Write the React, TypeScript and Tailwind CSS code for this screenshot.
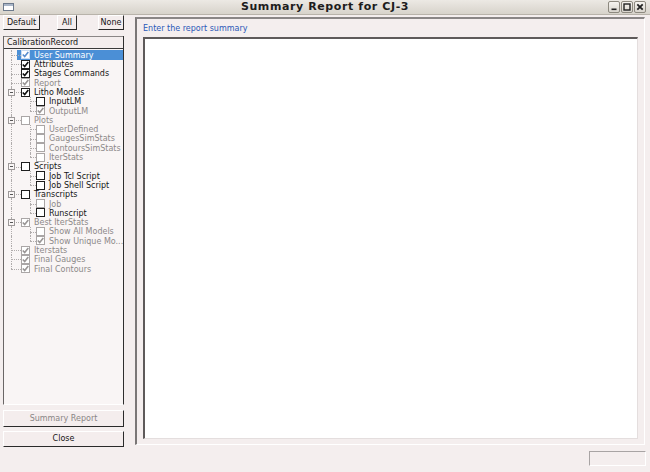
import React from "react";

type Item = {
  label: string;
  level: 0 | 1;
  checked: boolean;
  enabled: boolean;
  expander?: boolean;
  selected?: boolean;
  lastChild?: boolean;
};

const items: Item[] = [
  { label: "User Summary", level: 0, checked: true, enabled: false, selected: true },
  { label: "Attributes", level: 0, checked: true, enabled: true },
  { label: "Stages Commands", level: 0, checked: true, enabled: true },
  { label: "Report", level: 0, checked: true, enabled: false },
  { label: "Litho Models", level: 0, checked: true, enabled: true, expander: true },
  { label: "InputLM", level: 1, checked: false, enabled: true },
  { label: "OutputLM", level: 1, checked: true, enabled: false, lastChild: true },
  { label: "Plots", level: 0, checked: false, enabled: false, expander: true },
  { label: "UserDefined", level: 1, checked: false, enabled: false },
  { label: "GaugesSimStats", level: 1, checked: false, enabled: false },
  { label: "ContoursSimStats", level: 1, checked: false, enabled: false },
  { label: "IterStats", level: 1, checked: false, enabled: false, lastChild: true },
  { label: "Scripts", level: 0, checked: false, enabled: true, expander: true },
  { label: "Job Tcl Script", level: 1, checked: false, enabled: true },
  { label: "Job Shell Script", level: 1, checked: false, enabled: true, lastChild: true },
  { label: "Transcripts", level: 0, checked: false, enabled: true, expander: true },
  { label: "Job", level: 1, checked: false, enabled: false },
  { label: "Runscript", level: 1, checked: false, enabled: true, lastChild: true },
  { label: "Best IterStats", level: 0, checked: true, enabled: false, expander: true },
  { label: "Show All Models", level: 1, checked: false, enabled: false },
  { label: "Show Unique Mo...", level: 1, checked: true, enabled: false, lastChild: true },
  { label: "Iterstats", level: 0, checked: true, enabled: false },
  { label: "Final Gauges", level: 0, checked: true, enabled: false },
  { label: "Final Contours", level: 0, checked: true, enabled: false },
];

const font = { fontFamily: '"DejaVu Sans", "Liberation Sans", sans-serif' };

function CheckBox({ checked, enabled, selected }: { checked: boolean; enabled: boolean; selected?: boolean }) {
  const border = enabled ? "border-[#1e1e1e]" : selected ? "border-[#c9dcf2]" : "border-[#aaa6a6]";
  const stroke = enabled ? "#111" : selected ? "#5b8fcf" : "#9a9696";
  return (
    <div className={`w-[9px] h-[9px] shrink-0 border ${border} bg-white flex items-center justify-center`}>
      {checked && (
        <svg width="7" height="7" viewBox="0 0 7 7">
          <path d="M0.8 3.4 L2.7 5.6 L6.3 0.9" fill="none" stroke={stroke} strokeWidth="1.6" />
        </svg>
      )}
    </div>
  );
}

function TreeRow({ item, isLast }: { item: Item; isLast: boolean }) {
  const textColor = item.selected ? "text-white" : item.enabled ? "text-[#151515]" : "text-[#8d8989]";
  return (
    <div className="relative h-[9.3px] flex items-stretch">
      <div
        className={`absolute left-[7px] top-0 w-0 border-l border-dotted border-[#b0acac] ${isLast ? "h-1/2" : "h-full"}`}
      />
      {item.level === 0 && (
        <div className="absolute left-[7px] top-1/2 w-[10px] h-0 border-t border-dotted border-[#b0acac]" />
      )}
      {item.level === 1 && (
        <>
          <div
            className={`absolute left-[26px] top-0 w-0 border-l border-dotted border-[#b0acac] ${item.lastChild ? "h-1/2" : "h-full"}`}
          />
          <div className="absolute left-[26px] top-1/2 w-[6px] h-0 border-t border-dotted border-[#b0acac]" />
        </>
      )}
      {item.expander && (
        <div className="absolute left-[4px] top-[1.2px] w-[7px] h-[7px] border border-[#9c9898] bg-[#faf6f6] flex items-center justify-center">
          <div className="w-[3px] h-px bg-[#555]" />
        </div>
      )}
      <div className={`shrink-0 ${item.level === 0 ? "w-[13px]" : "w-[28px]"}`} />
      <div
        className={`flex-1 flex items-center pl-[4px] gap-[4px] ${item.selected ? "bg-[#4b8fd6]" : ""}`}
      >
        <CheckBox checked={item.checked} enabled={item.enabled} selected={item.selected} />
        <span className={`text-[8px] leading-[9.3px] whitespace-nowrap pt-[1px] ${textColor}`}>{item.label}</span>
      </div>
    </div>
  );
}

function RaisedButton({ children, className = "", disabled = false }: { children: React.ReactNode; className?: string; disabled?: boolean }) {
  return (
    <div
      className={`flex items-center justify-center border-t border-l border-t-[#ffffff] border-l-[#ffffff] border-r-[1.5px] border-b-[1.5px] border-r-[#2a2a2a] border-b-[#2a2a2a] bg-[#f4eded] text-[8px] ${disabled ? "text-[#8a8686]" : "text-[#151515]"} ${className}`}
    >
      {children}
    </div>
  );
}

function WinButton({ kind }: { kind: "min" | "max" | "close" }) {
  return (
    <div className="w-[12px] h-[12px] rounded-[2px] border border-[#8d897f] bg-linear-to-b from-[#f6f4f0] to-[#d9d5cd] flex items-center justify-center">
      <svg width="8" height="8" viewBox="0 0 8 8">
        {kind === "min" && <rect x="1.5" y="5.5" width="5" height="1.6" fill="#222" />}
        {kind === "max" && <rect x="1" y="1" width="6" height="6" fill="none" stroke="#222" strokeWidth="1.4" />}
        {kind === "close" && (
          <path d="M1.3 1.3 L6.7 6.7 M6.7 1.3 L1.3 6.7" stroke="#222" strokeWidth="1.8" />
        )}
      </svg>
    </div>
  );
}

export default function App() {
  return (
    <div className="w-[650px] h-[472px] bg-[#f4eeee] flex flex-col overflow-hidden" style={font}>
      {/* Title bar */}
      <div className="h-[15px] shrink-0 flex items-center bg-linear-to-b from-[#ece9e4] to-[#d7d3cb] border-b border-[#b8b3aa]">
        <div className="w-[60px] shrink-0 flex items-center">
          <div className="ml-[3px] w-[11px] h-[8px] border border-[#6d7a8c] bg-white flex flex-col">
            <div className="h-[2px] bg-[#a9b6c8]" />
          </div>
        </div>
        <div className="flex-1 text-center text-[11px] font-bold text-[#1c1c1c] tracking-[0.6px] leading-[14px]">
          Summary Report for CJ-3
        </div>
        <div className="w-[60px] shrink-0 flex items-center justify-end gap-[1px] pr-[4px]">
          <WinButton kind="min" />
          <WinButton kind="max" />
          <WinButton kind="close" />
        </div>
      </div>

      <div className="flex flex-1 min-h-0">
        {/* Left column */}
        <div className="w-[135px] shrink-0 pl-[3px] flex flex-col">
          <div className="w-[121px] h-[15px] flex">
            <RaisedButton className="w-[37px] h-[15px]">Default</RaisedButton>
            <RaisedButton className="w-[20px] h-[15px] ml-[17px]">All</RaisedButton>
            <RaisedButton className="w-[26px] h-[15px] ml-[21px]">None</RaisedButton>
          </div>

          <div className="w-[121px] h-[369px] mt-[6px] flex flex-col border-l border-l-[#6a6666] border-r-[1.5px] border-r-[#2e2e2e] border-b border-b-[#ffffff] bg-[#f9f5f5]">
            <div className="h-[13px] shrink-0 flex items-center pl-[3px] pt-[1px] border-t border-t-[#8a8686] border-b-[1.5px] border-b-[#3a3a3a] bg-[#f4eeee] text-[8px] text-[#151515]">
              CalibrationRecord
            </div>
            <div className="pt-[1.3px] flex flex-col">
              {items.map((it, i) => (
                <TreeRow key={i} item={it} isLast={i === items.length - 1} />
              ))}
            </div>
          </div>

          <RaisedButton className="w-[121px] h-[17px] mt-[5px]" disabled>
            Summary Report
          </RaisedButton>
          <RaisedButton className="w-[121px] h-[16px] mt-[4px]">Close</RaisedButton>
        </div>

        {/* Right side */}
        <div className="flex-1 flex flex-col">
          <div className="mt-[2px] mr-[5px] h-[428px] flex flex-col border-l-2 border-t-2 border-l-[#7a7676] border-t-[#8a8686] border-r border-b border-r-white border-b-white pl-[6px] pr-[6px]">
            <div className="mt-[5px] h-[10px] text-[8px] leading-[10px] text-[#2b59b8]">Enter the report summary</div>
            <div className="mt-[3px] h-[402px] bg-white border-l-2 border-t-2 border-l-[#5e5a5a] border-t-[#5e5a5a] border-r border-b border-r-[#e4dede] border-b-[#e4dede]" />
          </div>
          <div className="mt-[6px] self-end mr-[4px] w-[57px] h-[15px] border-t border-l border-t-[#a8a4a4] border-l-[#a8a4a4] border-r border-b border-r-white border-b-white" />
        </div>
      </div>
    </div>
  );
}
